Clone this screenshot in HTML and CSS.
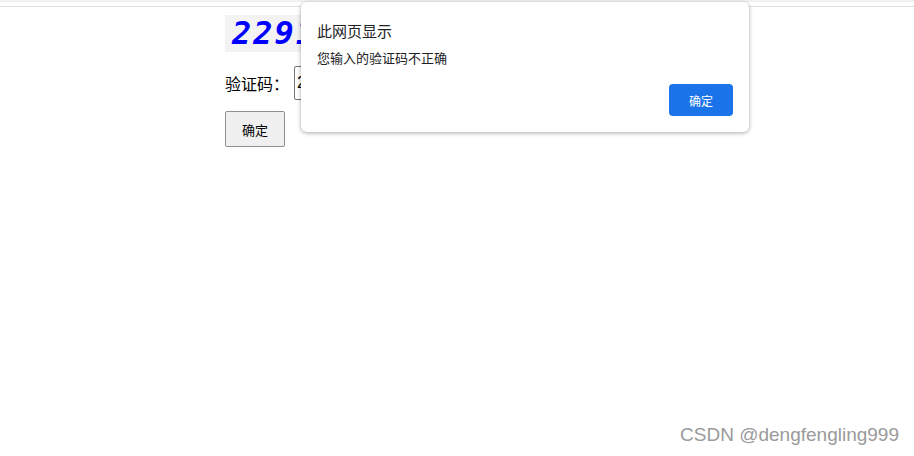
FILE: index.html
```html
<!DOCTYPE html>
<html lang="zh-CN">
<head>
    <meta charset="UTF-8">
    <meta name="viewport" content="width=device-width, initial-scale=1.0">
    <title>验证码</title>
    <link rel="stylesheet" href="styles.css">
</head>
<body>
    <div class="topbar"></div>
    <div class="topline"></div>

    <div class="page">
        <div class="captcha">2291</div>

        <div class="row">
            <label for="code">验证码：</label>
            <input type="text" id="code" name="code" value="2291">
        </div>

        <button class="submit">确定</button>
    </div>

    <!-- alert dialog -->
    <div class="dialog">
        <div class="dialog-title">此网页显示</div>
        <div class="dialog-msg">您输入的验证码不正确</div>
        <div class="dialog-actions">
            <button class="dialog-ok">确定</button>
        </div>
    </div>

    <div class="watermark">CSDN @dengfengling999</div>
</body>
</html>
```

FILE: styles.css
```css
body {
    margin: 0;
    font-family: "Noto Sans CJK SC", "Liberation Sans", sans-serif;
    background: #fff;
    color: #000;
    width: 914px;
    height: 456px;
    overflow: hidden;
}
.topbar {
    height: 2px;
    background: #f1f1f1;
}
.topline {
    height: 1px;
    margin-top: 4px;
    background: #dedede;
}
.page {
    padding: 8px 0 0 225px;
}
.captcha {
    display: inline-block;
    width: 96px;
    height: 37px;
    padding-left: 7px;
    background: #f3f3f3;
    color: #0000ff;
    font-family: "DejaVu Sans Mono", monospace;
    font-weight: bold;
    font-style: italic;
    font-size: 32px;
    line-height: 37px;
    letter-spacing: 2px;
}
.row {
    display: flex;
    align-items: center;
    margin-top: 14px;
}
.row label {
    font-size: 16px;
    width: 69px;
}
.row input {
    width: 160px;
    height: 34px;
    box-sizing: border-box;
    border: 1px solid #767676;
    border-radius: 2px;
    padding: 0 2px;
    font-size: 16px;
    font-family: "Liberation Sans", sans-serif;
}
.submit {
    display: block;
    margin-top: 11px;
    width: 60px;
    height: 36px;
    background: #f0f0f0;
    border: 1px solid #8f8f8f;
    border-radius: 2px;
    font-family: "Noto Sans CJK SC", sans-serif;
    font-size: 13px;
    color: #000;
    padding: 0;
}
.dialog {
    position: absolute;
    left: 301px;
    top: 2px;
    width: 448px;
    height: 130px;
    box-sizing: border-box;
    padding: 17px 16px 0 16px;
    background: #fff;
    border-radius: 6px;
    box-shadow: 0 1px 4px rgba(0, 0, 0, 0.35);
}
.dialog-title {
    font-size: 15px;
    line-height: 24px;
    color: #202124;
}
.dialog-msg {
    margin-top: 6px;
    font-size: 13px;
    line-height: 18px;
    color: #202124;
}
.dialog-actions {
    display: flex;
    justify-content: flex-end;
    margin-top: 17px;
}
.dialog-ok {
    width: 64px;
    height: 32px;
    background: #1a73e8;
    color: #fff;
    border: none;
    border-radius: 4px;
    font-family: "Noto Sans CJK SC", sans-serif;
    font-size: 12px;
}
.watermark {
    position: absolute;
    right: 15px;
    top: 424px;
    font-family: "Liberation Sans", sans-serif;
    font-size: 19px;
    color: #9a9a9a;
    text-shadow: 0 0 1px #fff;
}
```
